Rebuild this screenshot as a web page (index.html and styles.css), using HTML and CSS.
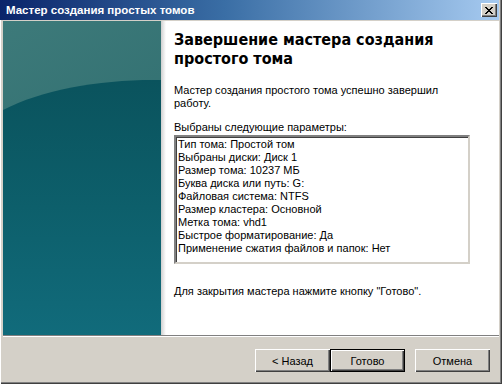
FILE: index.html
```html
<!doctype html>
<html lang="ru">
<head>
    <meta charset="UTF-8">
    <title>Мастер создания простых томов</title>
    <link rel="stylesheet" href="styles.css">
</head>
<body>
    <div class="window">
        <div class="titlebar">
            <span class="title">Мастер создания простых томов</span>
            <span class="close">
                <svg width="8" height="7" viewBox="0 0 8 7"><path d="M0 0h2v1h1v1h2v-1h1v-1h2v1h-1v1h-1v1h-1v1h1v1h1v1h1v1h-2v-1h-1v-1h-2v1h-1v1h-2v-1h1v-1h1v-1h1v-1h-1v-1h-1v-1h-1z" fill="#000"/></svg>
            </span>
        </div>

        <div class="main">
            <div class="side">
                <svg width="158" height="314" viewBox="0 0 158 314">
                    <defs>
                        <linearGradient id="top" x1="0" y1="0" x2="0.3" y2="1">
                            <stop offset="0" stop-color="#3d7a7a"/>
                            <stop offset="1" stop-color="#2b6a6c"/>
                        </linearGradient>
                        <linearGradient id="low" x1="0" y1="0" x2="0" y2="1">
                            <stop offset="0" stop-color="#0a535d"/>
                            <stop offset="0.5" stop-color="#0d5f6b"/>
                            <stop offset="1" stop-color="#116b7b"/>
                        </linearGradient>
                    </defs>
                    <rect width="158" height="314" fill="url(#top)"/>
                    <path d="M0 89 C40 68 100 58 158 59 L158 314 L0 314 Z" fill="url(#low)"/>
                </svg>
            </div>
            <div class="shade"></div>
            <div class="content">
                <h1>Завершение мастера создания простого тома</h1>
                <p class="intro">Мастер создания простого тома успешно завершил работу.</p>
                <p class="label">Выбраны следующие параметры:</p>
                <div class="summary">
                    <div>Тип тома: Простой том</div>
                    <div>Выбраны диски: Диск 1</div>
                    <div>Размер тома: 10237 МБ</div>
                    <div>Буква диска или путь: G:</div>
                    <div>Файловая система: NTFS</div>
                    <div>Размер кластера: Основной</div>
                    <div>Метка тома: vhd1</div>
                    <div>Быстрое форматирование: Да</div>
                    <div>Применение сжатия файлов и папок: Нет</div>
                </div>
                <p class="hint">Для закрытия мастера нажмите кнопку "Готово".</p>
            </div>
        </div>

        <div class="footer">
            <button class="btn">&lt; Назад</button>
            <button class="btn default">Готово</button>
            <button class="btn cancel">Отмена</button>
        </div>
    </div>
</body>
</html>
```

FILE: styles.css
```css
body {
    margin: 0;
    background: #d4d0c8;
    font-family: "Liberation Sans", Arial, sans-serif;
    font-size: 11px;
    color: #000;
}

.window {
    width: 502px;
    height: 384px;
    box-sizing: border-box;
    padding: 0 3px 2px 3px;
    background: #d4d0c8;
    box-shadow: inset 1px 0 #fff, inset -1px -1px #404040, inset -2px -2px #808080;
    display: flex;
    flex-direction: column;
}

.titlebar {
    height: 20px;
    margin: 0 0 1px -3px;
    padding-left: 6px;
    background: linear-gradient(to right, #0a246a 0%, #3a6ea5 45%, #a6caf0 100%);
    display: flex;
    align-items: center;
    justify-content: space-between;
}

.title {
    color: #fff;
    font-weight: bold;
    font-size: 11.5px;
}

.close {
    width: 16px;
    height: 14px;
    box-sizing: border-box;
    margin-right: 2px;
    background: #d4d0c8;
    box-shadow: inset 1px 1px #fff, inset -1px -1px #404040, inset -2px -2px #808080;
    display: flex;
    align-items: center;
    justify-content: center;
}

.main {
    height: 314px;
    background: #fff;
    display: flex;
}

.side {
    width: 158px;
    height: 314px;
}

.side svg {
    display: block;
}

.shade {
    width: 5px;
    background: linear-gradient(to right, #cfcfcf, #ececec 60%, #fff);
}

.content {
    flex: 1;
    padding: 9px 0 0 8px;
}

h1 {
    margin: 0 0 16px 0;
    font-family: "DejaVu Sans", Verdana, sans-serif;
    font-stretch: condensed;
    font-size: 16px;
    line-height: 19px;
    font-weight: bold;
    width: 300px;
}

p {
    margin: 0;
    line-height: 13px;
}

.intro {
    width: 290px;
    margin-bottom: 11px;
}

.label {
    margin-bottom: 1px;
}

.summary {
    width: 296px;
    height: 129px;
    box-sizing: border-box;
    padding: 1px 2px;
    border-style: solid;
    border-width: 2px;
    border-color: #808080 #d4d0c8 #d4d0c8 #808080;
    box-shadow: inset 1px 1px #404040;
    line-height: 13px;
}

.hint {
    margin-top: 21px;
}

.footer {
    flex: 1;
    border-top: 1px solid #808080;
    box-shadow: inset 0 1px #fff;
    display: flex;
    align-items: flex-start;
    justify-content: flex-end;
    padding: 13px 9px 0 0;
}

.btn {
    width: 75px;
    height: 23px;
    margin: 0;
    padding: 0;
    font-family: "Liberation Sans", Arial, sans-serif;
    font-size: 11px;
    color: #000;
    background: #d4d0c8;
    border: none;
    box-shadow: inset 1px 1px #fff, inset -1px -1px #404040, inset -2px -2px #808080;
}

.default {
    border: 1px solid #000;
}

.cancel {
    margin-left: 10px;
}
```
